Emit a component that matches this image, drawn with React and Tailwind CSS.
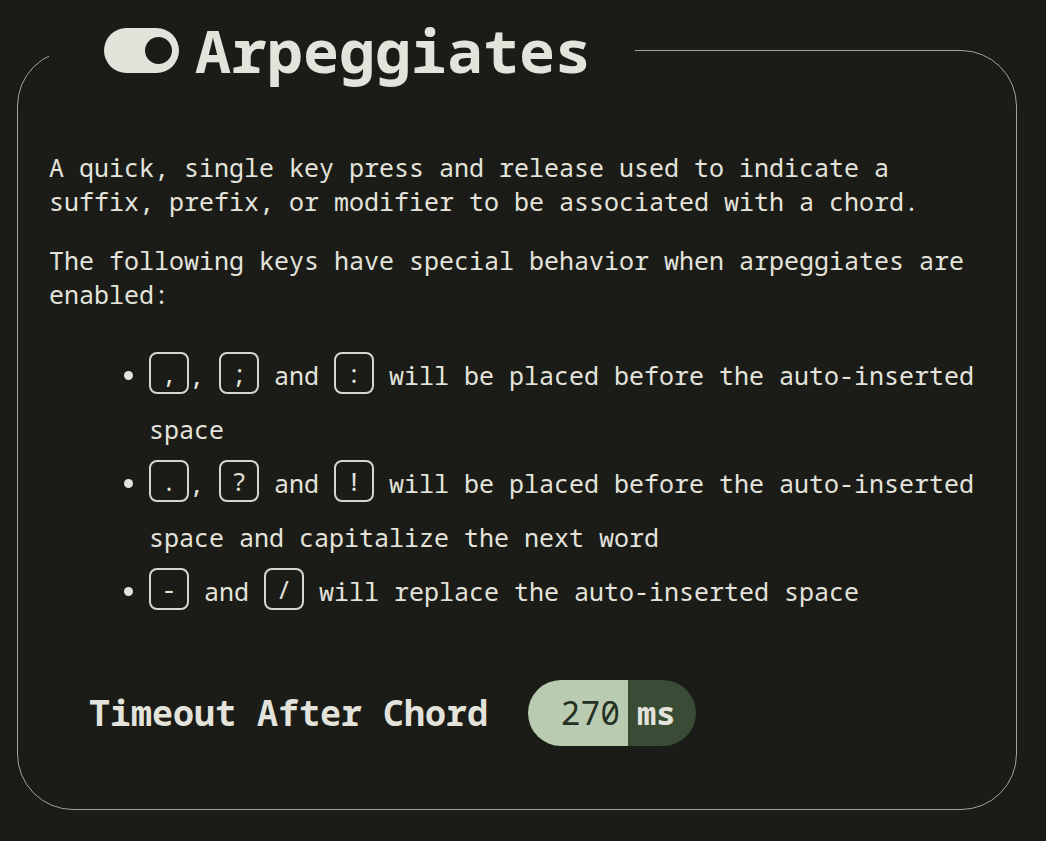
import React from 'react';

const mono = { fontFamily: '"Noto Sans Mono", "DejaVu Sans Mono", "Liberation Mono", monospace' };

const Key = ({ children }) => (
  <kbd
    className="inline-block h-[42px] rounded-[8px] border-2 border-[#d6d6cf] px-[10.5px] align-[2px] leading-[38px]"
    style={{ fontFamily: 'inherit', fontSize: '25px' }}
  >
    {children}
  </kbd>
);

const App = () => {
  return (
    <div className="min-h-screen bg-[#1b1c18] pt-[14px] text-[#e3e3dc]" style={mono}>
      <fieldset className="ml-[17px] w-[1000px] rounded-[56px] border border-[#a2a497] px-[31px] pt-[64px] pb-[63px]">
        <legend className="pl-[55px] pr-[44px]">
          <div className="flex items-center gap-[16px]">
            <div className="flex h-[45px] w-[75px] items-center justify-end rounded-full bg-[#e3e3dc] pr-[7px]">
              <div className="h-[27px] w-[27px] rounded-full bg-[#1b1c18]" />
            </div>
            <h2 className="text-[60px] font-bold leading-[72px]">Arpeggiates</h2>
          </div>
        </legend>

        <div className="flex flex-col text-[25px] leading-[34px]">
          <p>
            A quick, single key press and release used to indicate a suffix, prefix, or modifier to be
            associated with a chord.
          </p>
          <p className="mt-[25px]">The following keys have special behavior when arpeggiates are enabled:</p>

          <ul className="mt-[37px] list-disc pl-[100px] leading-[54px]">
            <li>
              <Key>,</Key>, <Key>;</Key> and <Key>:</Key> will be placed before the auto-inserted space
            </li>
            <li>
              <Key>.</Key>, <Key>?</Key> and <Key>!</Key> will be placed before the auto-inserted space and
              capitalize the next word
            </li>
            <li>
              <Key>-</Key> and <Key>/</Key> will replace the auto-inserted space
            </li>
          </ul>

          <div className="mt-[62px] flex items-center gap-[40px] pl-[40px]">
            <span className="text-[35px] font-bold">Timeout After Chord</span>
            <div className="flex h-[66px] overflow-hidden rounded-full">
              <div className="flex w-[100px] items-center justify-end bg-[#b9cbb0] pr-[8px] text-[33px] text-[#243022]">
                270
              </div>
              <div className="flex w-[68px] items-center bg-[#3a4b36] pl-[9px] text-[32px] font-bold">ms</div>
            </div>
          </div>
        </div>
      </fieldset>
    </div>
  );
};

export default App;
